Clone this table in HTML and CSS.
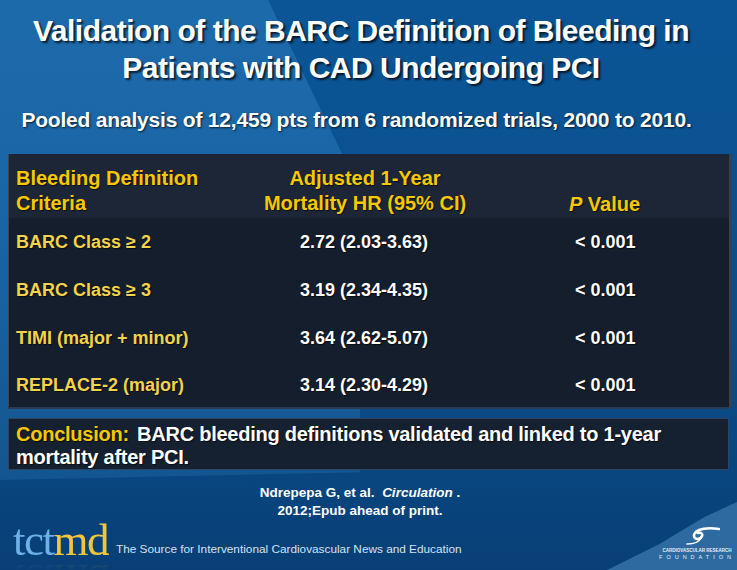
FILE: index.html
```html
<!DOCTYPE html>
<html>
<head>
<meta charset="utf-8">
<link rel="stylesheet" href="styles.css">
</head>
<body>
<div class="slide">
  <div class="bg-wedge"></div>
  <div class="bg-corner"></div>
  <h1 class="title">Validation of the BARC Definition of Bleeding in<br>Patients with CAD Undergoing PCI</h1>
  <p class="subtitle">Pooled analysis of 12,459 pts from 6 randomized trials, 2000 to 2010.</p>
  <div class="table">
    <div class="thead">
      <div class="h1c">Bleeding Definition<br>Criteria</div>
      <div class="h2c">Adjusted 1-Year<br>Mortality HR (95% CI)</div>
      <div class="h3c"><i>P</i> Value</div>
    </div>
    <div class="row first">
      <div class="lab">BARC Class ≥ 2</div>
      <div class="val">2.72 (2.03-3.63)</div>
      <div class="pv">&lt; 0.001</div>
    </div>
    <div class="row">
      <div class="lab">BARC Class ≥ 3</div>
      <div class="val">3.19 (2.34-4.35)</div>
      <div class="pv">&lt; 0.001</div>
    </div>
    <div class="row">
      <div class="lab">TIMI (major + minor)</div>
      <div class="val">3.64 (2.62-5.07)</div>
      <div class="pv">&lt; 0.001</div>
    </div>
    <div class="row last">
      <div class="lab">REPLACE-2 (major)</div>
      <div class="val">3.14 (2.30-4.29)</div>
      <div class="pv">&lt; 0.001</div>
    </div>
  </div>
  <p class="conclusion"><span class="lbl">Conclusion:</span> BARC bleeding definitions validated and linked to 1-year mortality after PCI.</p>
  <div class="cite">Ndrepepa G, et al.&nbsp; <i>Circulation</i> .<br>2012;Epub ahead of print.</div>
  <div class="footer">
    <div class="logo"><span class="tct">tct</span><span class="md">md</span></div>
    <div class="tagline">The Source for Interventional Cardiovascular News and Education</div>
    <div class="crf">
      <svg class="swirl" width="34" height="20" viewBox="0 0 34 20">
        <path d="M33 3 C26 2 18 2 13 4 C8 6 7 10 9 12 C11 14 15 13 16 10 C17 8 15 6 12 7" fill="none" stroke="#fff" stroke-width="2.6" stroke-linecap="round"/>
        <path d="M15 12 C13 16 8 18 1 18" fill="none" stroke="#fff" stroke-width="1.6" stroke-linecap="round"/>
      </svg>
      <div class="crf-top">CARDIOVASCULAR RESEARCH</div>
      <div class="crf-bot">FOUNDATION</div>
    </div>
  </div>
</div>
</body>
</html>
```
FILE: styles.css
```css
* { box-sizing: border-box; }
html, body { margin: 0; padding: 0; }
body { width: 737px; height: 570px; overflow: hidden; font-family: "Liberation Sans", Arial, sans-serif; }

.slide {
  position: relative;
  width: 737px;
  height: 570px;
  overflow: hidden;
  display: flex;
  flex-direction: column;
  align-items: stretch;
  background: linear-gradient(180deg, #0b5596 0%, #0a5190 40%, #0a4a86 70%, #083f76 100%);
}
.bg-wedge {
  position: absolute;
  left: 0; top: 0;
  width: 360px; height: 480px;
  background: linear-gradient(180deg, #1d6aab 0%, #1a64a4 50%, #13558f 100%);
  clip-path: polygon(0 0, 268px 0, 345px 160px, 300px 300px, 470px 470px, 0 480px);
}
.bg-corner {
  position: absolute;
  right: 0; bottom: 0;
  width: 130px; height: 68px;
  background: #2e69a0;
  clip-path: polygon(100% 0, 100% 100%, 0 100%, 40% 62%, 75% 22%);
}

.title {
  position: relative;
  margin: 12px 0 0;
  width: 722px;
  text-align: center;
  color: #fff;
  font-weight: bold;
  font-size: 30px;
  line-height: 37px;
  letter-spacing: -0.5px;
  text-shadow: 2px 2px 2px rgba(0,0,0,0.7);
}
.subtitle {
  position: relative;
  margin: 22px 0 0;
  width: 713px;
  text-align: center;
  color: #fff;
  font-weight: bold;
  font-size: 21px;
  line-height: 24px;
  letter-spacing: -0.2px;
  text-shadow: 1px 1px 2px rgba(0,0,0,0.7);
}

.table {
  position: relative;
  margin: 22px 0 0 8px;
  width: 721px;
  background: #151e2c;
  border-left: 1px solid #3a4659;
  box-shadow: 3px 0 0 #33425a, 0 2px 0 #2a3a52;
}
.thead, .row {
  display: grid;
  grid-template-columns: 234px 230px 1fr;
  padding-left: 7px;
}
.thead {
  background: #1c2637;
  height: 64px;
  padding-top: 12px;
  color: #f5c800;
  font-weight: bold;
  font-size: 20px;
  line-height: 25px;
  text-shadow: 1px 1px 1px rgba(0,0,0,0.6);
}
.h2c { text-align: center; }
.h3c { text-align: center; align-self: end; padding-bottom: 1px; }
.row {
  height: 48px;
  align-items: center;
  font-weight: bold;
  font-size: 18px;
  line-height: 22px;
  color: #fff;
  text-shadow: 1px 1px 1px rgba(0,0,0,0.6);
}
.row.last { height: 45px; }
.lab { color: #f2d34a; }
.val { padding-left: 50px; }
.pv { padding-left: 95px; }

.conclusion {
  position: relative;
  margin: 11px 0 0 8px;
  width: 721px;
  height: 56px;
  background: #152030;
  border: 1px solid #2b4563;
  padding: 4px 8px 0 7px;
  color: #fff;
  font-weight: bold;
  font-size: 20px;
  line-height: 23px;
  letter-spacing: -0.25px;
  text-shadow: 1px 1px 1px rgba(0,0,0,0.6);
}
.lbl { color: #f5c800; margin-right: 3px; }

.cite {
  position: relative;
  margin: 14px 0 0;
  width: 720px;
  text-align: center;
  color: #fff;
  font-weight: bold;
  font-size: 13.5px;
  line-height: 18px;
}

.footer {
  position: relative;
  margin-top: auto;
  height: 50px;
  display: flex;
  align-items: flex-end;
  padding: 0 0 6px 13px;
}
.logo {
  font-family: "Liberation Serif", "Times New Roman", serif;
  font-size: 45px;
  line-height: 40px;
  letter-spacing: -1.5px;
  height: 44px;
  -webkit-box-reflect: below -8px linear-gradient(transparent 65%, rgba(255,255,255,0.18));
}
.tct { color: #6fb0ea; }
.md { color: #f2c63a; }
.tagline {
  margin-left: 8px;
  margin-bottom: 8px;
  color: #d5e2ef;
  font-size: 11.8px;
  line-height: 14px;
}
.crf {
  margin-left: auto;
  width: 80px;
  display: flex;
  flex-direction: column;
  align-items: center;
  padding-bottom: 3px;
}
.swirl { display: block; margin-left: 12px; }
.crf-top {
  color: #e6eef6;
  font-size: 4.5px;
  line-height: 6px;
  font-weight: bold;
  white-space: nowrap;
  margin-top: 2px;
}
.crf-bot {
  color: #e6eef6;
  font-size: 5.5px;
  line-height: 7px;
  letter-spacing: 4px;
  white-space: nowrap;
}
```
